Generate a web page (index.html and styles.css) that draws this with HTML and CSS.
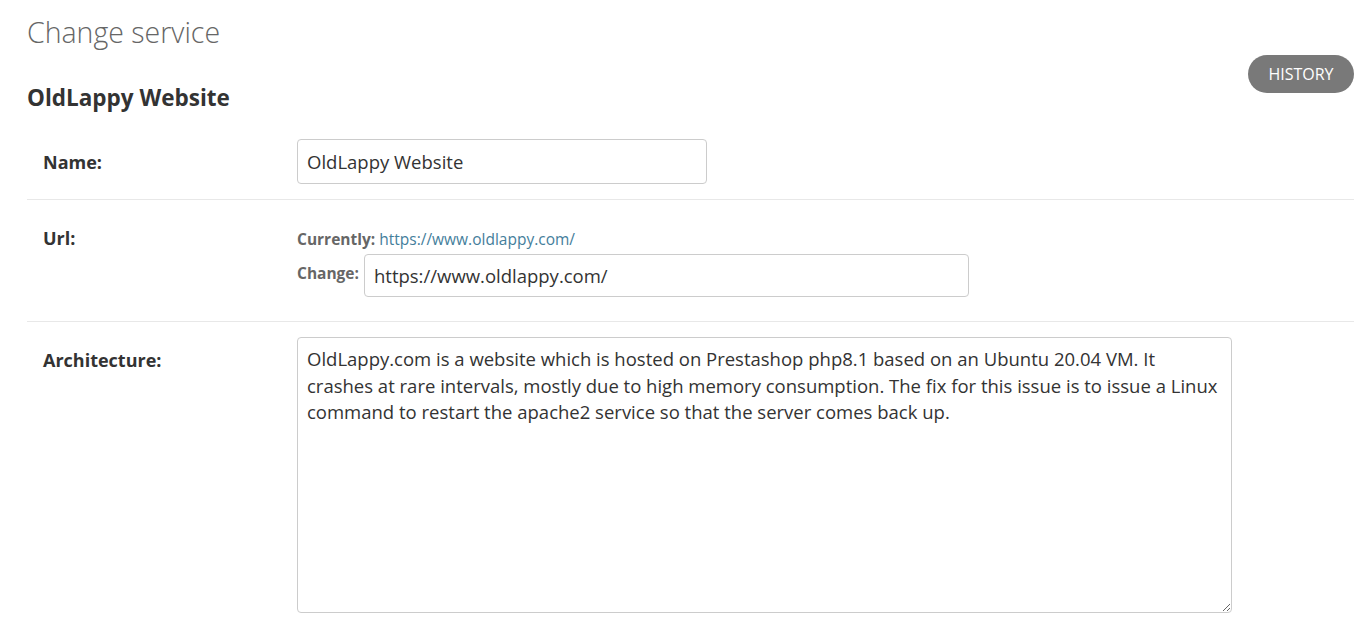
FILE: index.html
```html
<!DOCTYPE html>
<html lang="en">
<head>
<meta charset="utf-8">
<title>Change service</title>
<link rel="stylesheet" href="styles.css">
</head>
<body>
<div class="content">
  <h1 class="page-title">Change service</h1>
  <div class="object-header">
    <h2 class="object-name">OldLappy Website</h2>
    <a class="history-btn" href="#">History</a>
  </div>
  <form class="change-form">
    <div class="form-row">
      <label class="field-label" for="id_name">Name:</label>
      <div class="field-control">
        <input class="text-input name-input" id="id_name" type="text" value="OldLappy Website">
      </div>
    </div>
    <div class="form-row">
      <label class="field-label" for="id_url">Url:</label>
      <div class="field-control">
        <div class="url-widget">
          <div class="url-current"><span class="url-tag">Currently:</span> <a class="url-link" href="#">https://www.oldlappy.com/</a></div>
          <div class="url-change"><span class="url-tag">Change:</span><input class="text-input url-input" id="id_url" type="text" value="https://www.oldlappy.com/"></div>
        </div>
      </div>
    </div>
    <div class="form-row last">
      <label class="field-label" for="id_arch">Architecture:</label>
      <div class="field-control">
        <textarea class="text-area" id="id_arch" spellcheck="false">OldLappy.com is a website which is hosted on Prestashop php8.1 based on an Ubuntu 20.04 VM. It crashes at rare intervals, mostly due to high memory consumption. The fix for this issue is to issue a Linux command to restart the apache2 service so that the server comes back up.</textarea>
      </div>
    </div>
  </form>
</div>
</body>
</html>
```

FILE: styles.css
```css
* { box-sizing: border-box; }
html, body {
  margin: 0;
  padding: 0;
  background: #fff;
  font-family: "Open Sans", "Noto Sans", "Liberation Sans", sans-serif;
  color: #333;
  overflow: hidden;
}
.content {
  padding: 0 14px 0 27px;
}
.page-title {
  margin: 0;
  padding-top: 12px;
  font-size: 28.5px;
  font-weight: 300;
  color: #666;
  line-height: 40px;
}
.object-header {
  display: flex;
  justify-content: space-between;
  align-items: flex-start;
  height: 72px;
}
.object-name {
  margin: 0;
  padding-top: 31px;
  font-size: 22.5px;
  font-weight: 700;
  color: #333;
  line-height: 30px;
}
.history-btn {
  margin-top: 3px;
  display: flex;
  align-items: center;
  justify-content: center;
  width: 106px;
  height: 38px;
  border-radius: 19px;
  background: #797979;
  color: #fff;
  text-decoration: none;
  text-transform: uppercase;
  font-size: 16px;
}
.form-row {
  display: grid;
  grid-template-columns: 254px 1fr;
  padding: 15px 0 15px 16px;
  border-bottom: 1px solid #e8e8e8;
}
.form-row.last { border-bottom: none; }
.field-label {
  font-weight: 700;
  font-size: 18px;
  color: #333;
  padding-top: 11px;
}
.text-input {
  font-family: inherit;
  font-size: 18.5px;
  color: #333;
  border: 1px solid #ccc;
  border-radius: 4px;
  padding: 0 9px;
  outline: none;
  background: #fff;
}
.name-input {
  width: 410px;
  height: 45px;
}
.url-widget {
  padding-top: 13px;
  padding-bottom: 9px;
}
.url-current {
  font-size: 15.5px;
  line-height: 22px;
  color: #666;
  height: 26px;
}
.url-tag {
  font-weight: 700;
  color: #666;
  font-size: 15.5px;
}
.url-link {
  color: #447e9b;
  text-decoration: none;
}
.url-change {
  display: flex;
  align-items: flex-start;
  gap: 5px;
}
.url-change .url-tag {
  line-height: 22px;
  padding-top: 8px;
}
.url-input {
  width: 605px;
  height: 43px;
}
.text-area {
  display: block;
  width: 935px;
  height: 276px;
  font-family: inherit;
  font-size: 18.5px;
  line-height: 26.5px;
  color: #333;
  border: 1px solid #ccc;
  border-radius: 4px;
  padding: 8px 9px;
  resize: both;
  outline: none;
}
```
